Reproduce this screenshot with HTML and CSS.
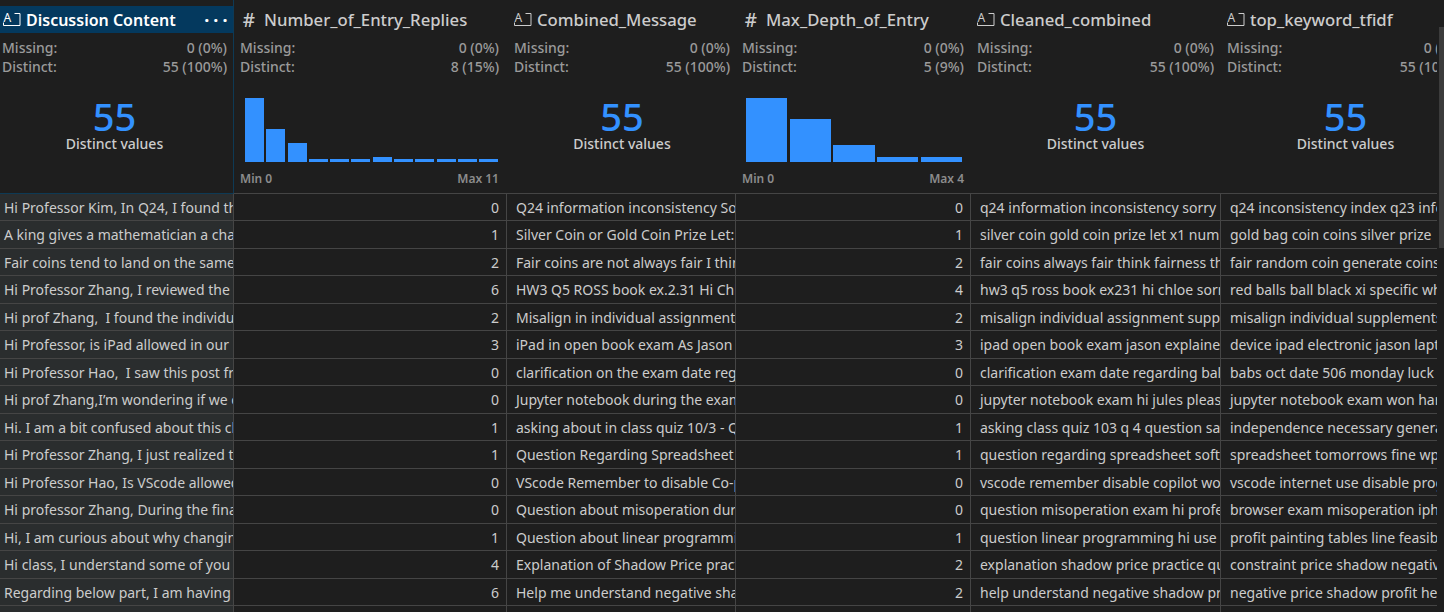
FILE: index.html
```html
<!DOCTYPE html>
<html lang="en">
<head>
<meta charset="UTF-8">
<title>Data Wrangler</title>
<link rel="stylesheet" href="styles.css">
</head>
<body>
<div class="scrollbar"></div>
<div class="grid">
  <div class="summary selected first">
    <div class="head">
      <svg class="icon" viewBox="0 0 18 15"><text x="0.5" y="9.500" class="icon-a">A</text><path d="M.5 10.500v3h16.500v-12h-5.500" class="icon-line"/></svg>
      <span class="title">Discussion Content</span>
      <span class="dots">···</span>
    </div>
    <div class="stat"><span>Missing:</span><span>0 (0%)</span></div>
    <div class="stat"><span>Distinct:</span><span>55 (100%)</span></div>
    <div class="distinct"><b>55</b><span>Distinct values</span></div>
  </div>
  <div class="summary second">
    <div class="head"><span class="hash">#</span><span class="title">Number_of_Entry_Replies</span></div>
    <div class="stat"><span>Missing:</span><span>0 (0%)</span></div>
    <div class="stat"><span>Distinct:</span><span>8 (15%)</span></div>
    <div class="hist narrow">
      <i style="height:64px"></i><i style="height:33px"></i><i style="height:19px"></i><i style="height:3px"></i><i style="height:3px"></i><i style="height:3px"></i><i style="height:5px"></i><i style="height:3px"></i><i style="height:3px"></i><i style="height:3px"></i><i style="height:3px"></i><i style="height:3px"></i>
    </div>
    <div class="range"><span>Min 0</span><span>Max 11</span></div>
  </div>
  <div class="summary third">
    <div class="head">
      <svg class="icon" viewBox="0 0 18 15"><text x="0.5" y="9.500" class="icon-a">A</text><path d="M.5 10.500v3h16.500v-12h-5.500" class="icon-line"/></svg>
      <span class="title">Combined_Message</span>
    </div>
    <div class="stat"><span>Missing:</span><span>0 (0%)</span></div>
    <div class="stat"><span>Distinct:</span><span>55 (100%)</span></div>
    <div class="distinct"><b>55</b><span>Distinct values</span></div>
  </div>
  <div class="summary">
    <div class="head"><span class="hash">#</span><span class="title">Max_Depth_of_Entry</span></div>
    <div class="stat"><span>Missing:</span><span>0 (0%)</span></div>
    <div class="stat"><span>Distinct:</span><span>5 (9%)</span></div>
    <div class="hist wide">
      <i style="height:64px"></i><i style="height:43px"></i><i style="height:17px"></i><i style="height:5px"></i><i style="height:5px"></i>
    </div>
    <div class="range"><span>Min 0</span><span>Max 4</span></div>
  </div>
  <div class="summary">
    <div class="head">
      <svg class="icon" viewBox="0 0 18 15"><text x="0.5" y="9.500" class="icon-a">A</text><path d="M.5 10.500v3h16.500v-12h-5.500" class="icon-line"/></svg>
      <span class="title">Cleaned_combined</span>
    </div>
    <div class="stat"><span>Missing:</span><span>0 (0%)</span></div>
    <div class="stat"><span>Distinct:</span><span>55 (100%)</span></div>
    <div class="distinct"><b>55</b><span>Distinct values</span></div>
  </div>
  <div class="summary">
    <div class="head">
      <svg class="icon" viewBox="0 0 18 15"><text x="0.5" y="9.500" class="icon-a">A</text><path d="M.5 10.500v3h16.500v-12h-5.500" class="icon-line"/></svg>
      <span class="title">top_keyword_tfidf</span>
    </div>
    <div class="stat"><span>Missing:</span><span>0 (0%)</span></div>
    <div class="stat"><span>Distinct:</span><span>55 (100%)</span></div>
    <div class="distinct"><b>55</b><span>Distinct values</span></div>
  </div>

  <div class="cell first">Hi Professor Kim, In Q24, I found the</div><div class="cell num">0</div><div class="cell">Q24 information inconsistency Sorry</div><div class="cell num">0</div><div class="cell">q24 information inconsistency sorry</div><div class="cell">q24 inconsistency index q23 information</div>
  <div class="cell first">A king gives a mathematician a chance</div><div class="cell num">1</div><div class="cell">Silver Coin or Gold Coin Prize Let: x1</div><div class="cell num">1</div><div class="cell">silver coin gold coin prize let x1 number</div><div class="cell">gold bag coin coins silver prize</div>
  <div class="cell first">Fair coins tend to land on the same</div><div class="cell num">2</div><div class="cell">Fair coins are not always fair I think</div><div class="cell num">2</div><div class="cell">fair coins always fair think fairness that</div><div class="cell">fair random coin generate coins</div>
  <div class="cell first">Hi Professor Zhang, I reviewed the</div><div class="cell num">6</div><div class="cell">HW3 Q5 ROSS book ex.2.31 Hi Chloe</div><div class="cell num">4</div><div class="cell">hw3 q5 ross book ex231 hi chloe sorry</div><div class="cell">red balls ball black xi specific which</div>
  <div class="cell first">Hi prof Zhang,  I found the individual</div><div class="cell num">2</div><div class="cell">Misalign in individual assignment supp</div><div class="cell num">2</div><div class="cell">misalign individual assignment supplement</div><div class="cell">misalign individual supplements</div>
  <div class="cell first">Hi Professor, is iPad allowed in our</div><div class="cell num">3</div><div class="cell">iPad in open book exam As Jason</div><div class="cell num">3</div><div class="cell">ipad open book exam jason explained</div><div class="cell">device ipad electronic jason laptop</div>
  <div class="cell first">Hi Professor Hao,  I saw this post from</div><div class="cell num">0</div><div class="cell">clarification on the exam date regarding</div><div class="cell num">0</div><div class="cell">clarification exam date regarding ball</div><div class="cell">babs oct date 506 monday luck</div>
  <div class="cell first">Hi prof Zhang,I’m wondering if we can</div><div class="cell num">0</div><div class="cell">Jupyter notebook during the exam Hi</div><div class="cell num">0</div><div class="cell">jupyter notebook exam hi jules please</div><div class="cell">jupyter notebook exam won hard</div>
  <div class="cell first">Hi. I am a bit confused about this class</div><div class="cell num">1</div><div class="cell">asking about in class quiz 10/3 - Question</div><div class="cell num">1</div><div class="cell">asking class quiz 103 q 4 question say</div><div class="cell">independence necessary general</div>
  <div class="cell first">Hi Professor Zhang, I just realized that</div><div class="cell num">1</div><div class="cell">Question Regarding Spreadsheet Software</div><div class="cell num">1</div><div class="cell">question regarding spreadsheet software</div><div class="cell">spreadsheet tomorrows fine wps</div>
  <div class="cell first">Hi Professor Hao, Is VScode allowed in</div><div class="cell num">0</div><div class="cell">VScode Remember to disable Co-pilot</div><div class="cell num">0</div><div class="cell">vscode remember disable copilot would</div><div class="cell">vscode internet use disable program</div>
  <div class="cell first">Hi professor Zhang, During the final</div><div class="cell num">0</div><div class="cell">Question about misoperation during the</div><div class="cell num">0</div><div class="cell">question misoperation exam hi professor</div><div class="cell">browser exam misoperation iphone</div>
  <div class="cell first">Hi, I am curious about why changing</div><div class="cell num">1</div><div class="cell">Question about linear programming Hi</div><div class="cell num">1</div><div class="cell">question linear programming hi use excel</div><div class="cell">profit painting tables line feasible</div>
  <div class="cell first">Hi class, I understand some of you have</div><div class="cell num">4</div><div class="cell">Explanation of Shadow Price practice</div><div class="cell num">2</div><div class="cell">explanation shadow price practice question</div><div class="cell">constraint price shadow negative</div>
  <div class="cell first">Regarding below part, I am having trouble</div><div class="cell num">6</div><div class="cell">Help me understand negative shadow price</div><div class="cell num">2</div><div class="cell">help understand negative shadow price</div><div class="cell">negative price shadow profit here</div>
  <div class="cell first"></div><div class="cell"></div><div class="cell"></div><div class="cell"></div><div class="cell"></div><div class="cell"></div>
</div>
</body>
</html>
```

FILE: styles.css
```css
html, body {
  margin: 0;
  height: 100%;
  overflow: hidden;
  background-color: #1e1e1e;
}

body {
  font-family: "Noto Sans", sans-serif;
  font-size: 14px;
  color: #cccccc;
}

.grid {
  display: grid;
  grid-template-columns: 233px 273px 229px 235px 250px 250px;
  grid-template-rows: 193.500px;
  grid-auto-rows: 27.500px;
  width: 1437px;
  overflow: hidden;
}

.summary {
  padding: 6px 6px 0 7px;
  border-bottom: 1px solid #454545;
  min-width: 0;
  overflow: hidden;
}

.summary.first {
  padding-left: 2px;
  border-bottom-color: #0e3a55;
}

.summary.second {
  padding-left: 6px;
  padding-right: 7px;
  border-left: 1px solid #0e3a55;
}

.summary.third {
  padding-left: 8px;
  padding-right: 5px;
}

.head {
  display: flex;
  align-items: center;
  height: 27px;
  margin-bottom: 5px;
  font-size: 16.700px;
  font-weight: 500;
  white-space: nowrap;
}

.selected .head {
  margin-left: -2px;
  margin-right: -6px;
  padding-left: 3px;
  background-color: #04395e;
  color: #ffffff;
  font-size: 16px;
  font-weight: 600;
}

.icon {
  width: 18px;
  height: 15px;
  margin-right: 5px;
  flex: none;
  overflow: visible;
}

.icon-a {
  font-family: "Noto Sans", sans-serif;
  font-size: 12px;
  font-weight: 400;
  fill: currentColor;
}

.icon-line {
  fill: none;
  stroke: currentColor;
  stroke-width: 1;
}

.hash {
  width: 18px;
  margin-right: 6px;
  text-align: center;
  font-size: 19px;
  font-weight: 500;
}

.dots {
  margin-left: auto;
  margin-right: 1.500px;
  font-size: 18px;
  font-weight: 700;
  letter-spacing: 4px;
}

.stat {
  display: flex;
  justify-content: space-between;
  height: 19px;
  line-height: 19px;
  color: #9a9a9a;
  font-weight: 500;
  white-space: nowrap;
}

.distinct {
  display: flex;
  flex-direction: column;
  align-items: center;
  margin-top: 22px;
}

.distinct b {
  font-size: 38px;
  font-weight: 500;
  line-height: 37px;
  color: #3391ff;
}

.distinct span {
  font-weight: 500;
  line-height: 18px;
}

.hist {
  display: flex;
  align-items: flex-end;
  height: 64px;
  margin-top: 22px;
}

.hist i {
  display: block;
  flex: 1;
  background-color: #3391ff;
}

.hist.narrow {
  gap: 2.300px;
  margin-left: 5px;
  margin-right: 1px;
}

.hist.wide {
  gap: 2.400px;
  margin-left: 4px;
  margin-right: 2px;
}

.range {
  display: flex;
  justify-content: space-between;
  margin-top: 8px;
  font-size: 12px;
  font-weight: 600;
  color: #8c8c8c;
}

.cell {
  padding: 0 7px 0 9px;
  border-left: 1px solid #454545;
  border-bottom: 1px solid #454545;
  line-height: 28px;
  white-space: pre;
  overflow: hidden;
}

.cell.first {
  padding-left: 4px;
  padding-right: 0;
  border-left: 0;
  background-color: #2a2d2e;
}

.cell.num {
  text-align: right;
}

.scrollbar {
  position: absolute;
  top: 27px;
  right: 0;
  width: 5px;
  height: 221px;
  background-color: #3c3c3c;
}
```
